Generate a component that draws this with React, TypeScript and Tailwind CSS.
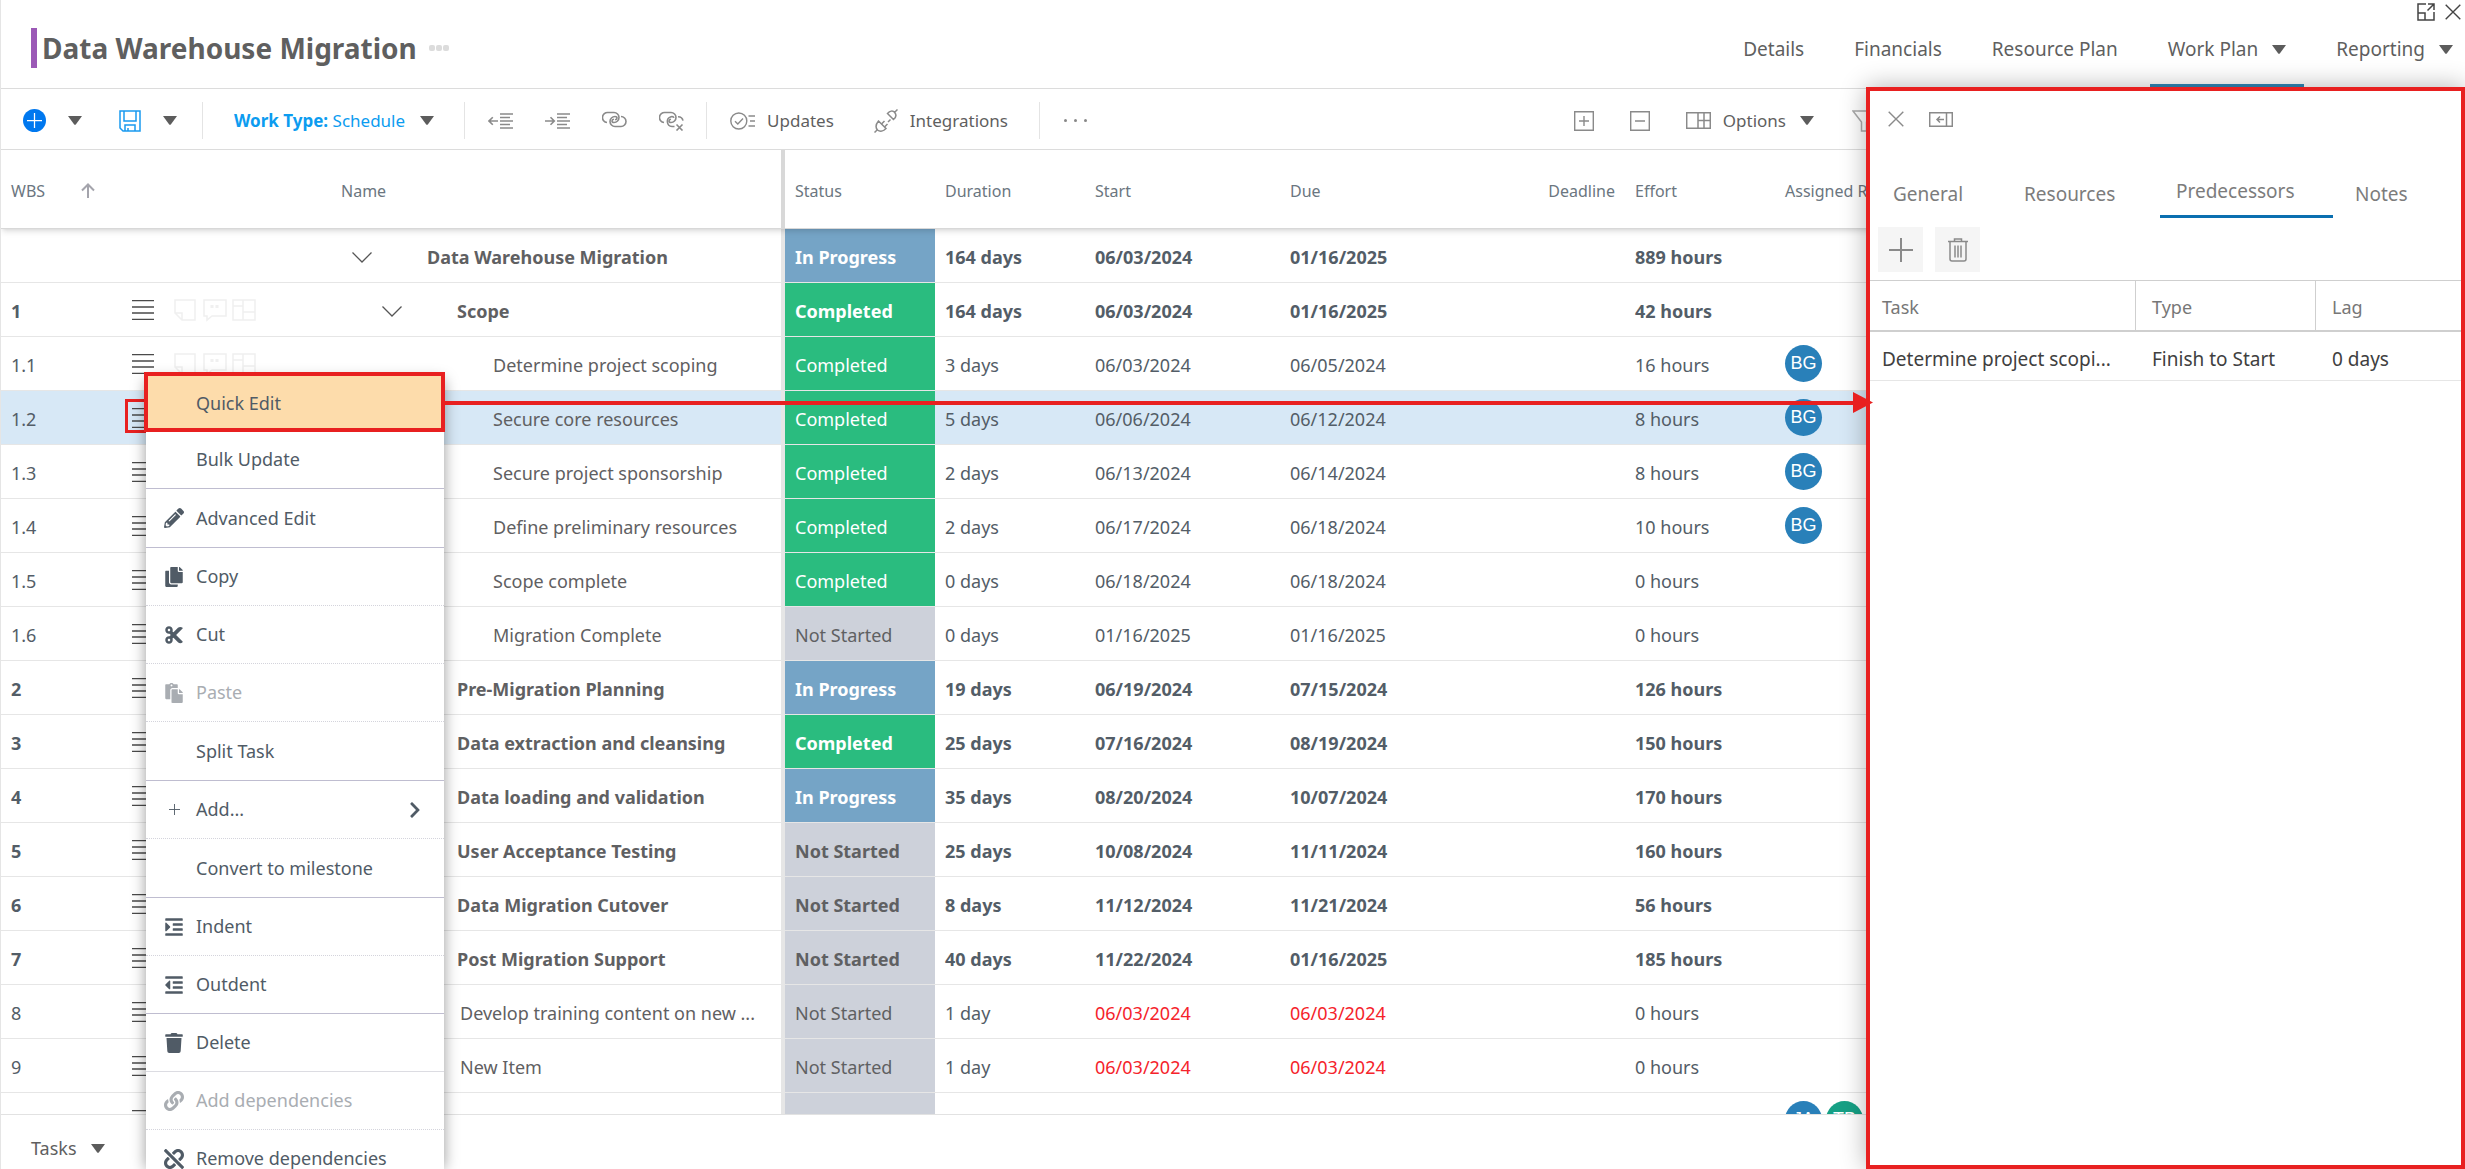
import type { ReactNode } from "react";
import {
  FaChevronRight,
  FaCopy,
  FaCut,
  FaIndent,
  FaLink,
  FaOutdent,
  FaPaste,
  FaPencilAlt,
  FaTrash,
  FaUnlink,
} from "react-icons/fa";

type Status = "In Progress" | "Completed" | "Not Started";

type Task = {
  wbs: string;
  name: string;
  indent: string;
  status: Status;
  duration: string;
  start: string;
  due: string;
  effort: string;
  bold?: boolean;
  open?: boolean;
  badges?: boolean;
  selected?: boolean;
  late?: boolean;
  people?: { initials: string; color: string }[];
};

const BG = [{ initials: "BG", color: "bg-[#2980b9]" }];

const TASKS: Task[] = [
  { wbs: "", name: "Data Warehouse Migration", indent: "pl-[22px]", status: "In Progress", duration: "164 days", start: "06/03/2024", due: "01/16/2025", effort: "889 hours", bold: true, open: true },
  { wbs: "1", name: "Scope", indent: "pl-[52px]", status: "Completed", duration: "164 days", start: "06/03/2024", due: "01/16/2025", effort: "42 hours", bold: true, open: true, badges: true },
  { wbs: "1.1", name: "Determine project scoping", indent: "pl-[163px]", status: "Completed", duration: "3 days", start: "06/03/2024", due: "06/05/2024", effort: "16 hours", badges: true, people: BG },
  { wbs: "1.2", name: "Secure core resources", indent: "pl-[163px]", status: "Completed", duration: "5 days", start: "06/06/2024", due: "06/12/2024", effort: "8 hours", selected: true, people: BG },
  { wbs: "1.3", name: "Secure project sponsorship", indent: "pl-[163px]", status: "Completed", duration: "2 days", start: "06/13/2024", due: "06/14/2024", effort: "8 hours", people: BG },
  { wbs: "1.4", name: "Define preliminary resources", indent: "pl-[163px]", status: "Completed", duration: "2 days", start: "06/17/2024", due: "06/18/2024", effort: "10 hours", people: BG },
  { wbs: "1.5", name: "Scope complete", indent: "pl-[163px]", status: "Completed", duration: "0 days", start: "06/18/2024", due: "06/18/2024", effort: "0 hours" },
  { wbs: "1.6", name: "Migration Complete", indent: "pl-[163px]", status: "Not Started", duration: "0 days", start: "01/16/2025", due: "01/16/2025", effort: "0 hours" },
  { wbs: "2", name: "Pre-Migration Planning", indent: "pl-[127px]", status: "In Progress", duration: "19 days", start: "06/19/2024", due: "07/15/2024", effort: "126 hours", bold: true },
  { wbs: "3", name: "Data extraction and cleansing", indent: "pl-[127px]", status: "Completed", duration: "25 days", start: "07/16/2024", due: "08/19/2024", effort: "150 hours", bold: true },
  { wbs: "4", name: "Data loading and validation", indent: "pl-[127px]", status: "In Progress", duration: "35 days", start: "08/20/2024", due: "10/07/2024", effort: "170 hours", bold: true },
  { wbs: "5", name: "User Acceptance Testing", indent: "pl-[127px]", status: "Not Started", duration: "25 days", start: "10/08/2024", due: "11/11/2024", effort: "160 hours", bold: true },
  { wbs: "6", name: "Data Migration Cutover", indent: "pl-[127px]", status: "Not Started", duration: "8 days", start: "11/12/2024", due: "11/21/2024", effort: "56 hours", bold: true },
  { wbs: "7", name: "Post Migration Support", indent: "pl-[127px]", status: "Not Started", duration: "40 days", start: "11/22/2024", due: "01/16/2025", effort: "185 hours", bold: true },
  { wbs: "8", name: "Develop training content on new ...", indent: "pl-[130px]", status: "Not Started", duration: "1 day", start: "06/03/2024", due: "06/03/2024", effort: "0 hours", late: true },
  { wbs: "9", name: "New Item", indent: "pl-[130px]", status: "Not Started", duration: "1 day", start: "06/03/2024", due: "06/03/2024", effort: "0 hours", late: true },
  { wbs: "", name: "", indent: "pl-[130px]", status: "Not Started", duration: "", start: "", due: "", effort: "", people: [{ initials: "JA", color: "bg-[#2980b9]" }, { initials: "TB", color: "bg-[#16a085]" }] },
];

const STATUS_STYLE: Record<Status, string> = {
  "In Progress": "bg-[#75a4c6] text-white",
  Completed: "bg-[#2abc7f] text-white",
  "Not Started": "bg-[#cdd1da] text-[#5f6062]",
};

const SOLID = "h-[59px] border-b border-[#bfbdd0]";
const DOTTED = "h-[58px] border-b border-dotted border-[#d4d4dc]";

type MenuEntry = {
  label: string;
  icon?: ReactNode;
  line: string;
  disabled?: boolean;
  more?: boolean;
};

const MENU: MenuEntry[] = [
  { label: "Bulk Update", line: SOLID },
  { label: "Advanced Edit", icon: <FaPencilAlt />, line: SOLID },
  { label: "Copy", icon: <FaCopy />, line: DOTTED },
  { label: "Cut", icon: <FaCut />, line: DOTTED },
  { label: "Paste", icon: <FaPaste />, line: DOTTED, disabled: true },
  { label: "Split Task", line: SOLID },
  { label: "Add...", icon: <PlusThin className="size-[11px]" />, line: DOTTED, more: true },
  { label: "Convert to milestone", line: SOLID },
  { label: "Indent", icon: <FaIndent />, line: DOTTED },
  { label: "Outdent", icon: <FaOutdent />, line: "h-[58px] border-b border-[#bfbdd0]" },
  { label: "Delete", icon: <FaTrash />, line: "h-[58px] border-b border-[#dcdce2]" },
  { label: "Add dependencies", icon: <FaLink />, line: DOTTED, disabled: true },
  { label: "Remove dependencies", icon: <FaUnlink />, line: DOTTED },
];

function PlusThin({ className }: { className: string }) {
  return (
    <svg className={className} viewBox="0 0 24 24" fill="none" stroke="currentColor" strokeWidth="2">
      <path d="M12 0v24M0 12h24" />
    </svg>
  );
}

function Caret() {
  return (
    <svg className="h-[9px] w-[14px] shrink-0" viewBox="0 0 14 9" fill="#5c5c5c">
      <path d="M0 0h14L7.8 8.4q-.8.9-1.6 0z" />
    </svg>
  );
}

function Chevron() {
  return (
    <svg className="h-[11px] w-5 shrink-0" viewBox="0 0 20 11" fill="none" stroke="#555" strokeWidth="1.3">
      <path d="M.5.5 10 10 19.5.5" />
    </svg>
  );
}

function CrossIcon({ className }: { className: string }) {
  return (
    <svg className={className} viewBox="0 0 16 16" fill="none" stroke="currentColor" strokeWidth="1.4">
      <path d="M.7.7l14.6 14.6M15.3.7.7 15.3" />
    </svg>
  );
}

function HandleIcon() {
  return (
    <svg className="h-5 w-[22px]" viewBox="0 0 22 20" fill="none" stroke="#4a4a4a" strokeWidth="1.3">
      <path d="M0 .7h22M0 7h22M0 13h22M0 19.3h22" />
    </svg>
  );
}

function BadgeIcons() {
  return (
    <svg className="h-6 w-[82px]" viewBox="0 0 82 24" fill="none" stroke="#f0f0f0" strokeWidth="1.6">
      <path d="M1 2h20v20H8l-7-7zM8 22v-7H1" />
      <path d="M30 2h22v16H38l-5 4v-4h-3z" />
      <path d="M38 7v3M43 7v3" strokeWidth="3" />
      <path d="M59 2h22v20H59zM69 2v20M59 8h10M69 14h12" />
    </svg>
  );
}

function ShiftIcon({ right }: { right?: boolean }) {
  return (
    <svg className="h-4 w-[25px]" viewBox="0 0 25 16" fill="none" stroke="#8a8a8a" strokeWidth="1.6">
      <path d="M12 1h13M12 4.5h10M12 8h13M12 11.5h10M12 15h13" strokeWidth="1.5" />
      <path d={right ? "M0 8h9M5.5 4.2 9.3 8l-3.8 3.8" : "M10 8H1M4.8 4.2 1 8l3.8 3.8"} />
    </svg>
  );
}

function ChainIcon({ broken }: { broken?: boolean }) {
  return (
    <svg className="h-5 w-[25px]" viewBox="0 0 25 20" fill="none" stroke="#8a8a8a" strokeWidth="1.6">
      <path d="M5 11.5A5 5 0 0 1 6 1.500h6a5 5 0 0 1 0 10q-2 0-2-1.500t2-1.800" />
      {broken ? (
        <>
          <path d="M15.5 15.5H13a5 5 0 0 1-1-9.800q2.600-.4 2.800 1.200M19 5.700a5 5 0 0 1 5 4" />
          <path d="m17.5 13.5 6 6M23.5 13.5l-6 6" />
        </>
      ) : (
        <path d="M19 5.5a5 5 0 0 1 0 10h-6a5 5 0 0 1 0-10q2 0 2 1.500t-2 1.800" />
      )}
    </svg>
  );
}

function UpdatesIcon() {
  return (
    <svg className="h-[18px] w-[25px]" viewBox="0 0 25 18" fill="none" stroke="#8a8a8a" strokeWidth="1.4">
      <circle cx="8.8" cy="9" r="8" />
      <path d="m5 9.2 2.800 2.800L13 6.500M18.500 4H25M20 9h5M18.500 14H25" />
    </svg>
  );
}

function PlugIcon() {
  return (
    <svg className="size-6" viewBox="0 0 24 24" fill="none" stroke="#8a8a8a" strokeWidth="1.5">
      <path d="m13.500 4.500 6 6c2.500-2 3.200-4.500 1.200-7s-5-1.500-7.200 1zM20.700 3.300 23.500.5" />
      <path d="m4.500 12 7.500 7.500c-2.500 2.800-6 3.500-8.500 1.500-2.300-2.700-1.500-6 1-9zM3.300 20.700.5 23.500" />
      <path d="M14 13l2.500-2.500M7.500 15l3-3M10.500 18l3-3" />
    </svg>
  );
}

function Divider() {
  return <div className="h-[37px] w-px bg-[#e4e4e4]" />;
}

function Header() {
  return (
    <header className="flex h-[89px] shrink-0 items-stretch border-b border-[#dcdcdc] text-[19px] text-[#5f5f5f]">
      <div className="flex items-center gap-3 pb-[5px] pt-3 pl-[30px]">
        <h1 className="flex h-10 items-center border-l-[6px] border-[#9b59b6] pl-[5px] text-[28px] font-bold">
          Data Warehouse Migration
        </h1>
        <button aria-label="More" className="flex gap-px">
          <i className="size-[6px] rounded-xs bg-[#dcdcdc]" />
          <i className="size-[6px] rounded-xs bg-[#dcdcdc]" />
          <i className="size-[6px] rounded-xs bg-[#dcdcdc]" />
        </button>
      </div>
      <nav className="ml-auto flex gap-[14px] whitespace-nowrap">
        <a href="#details" className="flex items-center px-[18px] pt-[10px]">Details</a>
        <a href="#financials" className="flex items-center px-[18px] pt-[10px]">Financials</a>
        <a href="#resource-plan" className="flex items-center px-[18px] pt-[10px]">Resource Plan</a>
        <a href="#work-plan" className="flex items-center gap-[14px] border-b-4 border-[#2f87b7] px-[18px] pt-[14px]">
          Work Plan <Caret />
        </a>
        <a href="#reporting" className="flex items-center gap-[14px] pt-[10px] pl-[18px] pr-3">
          Reporting <Caret />
        </a>
      </nav>
      <div className="absolute right-1 top-[3px] flex items-center gap-[10px] text-[#444]">
        <button aria-label="Open in window">
          <svg className="size-[18px]" viewBox="0 0 18 18" fill="none" stroke="currentColor" strokeWidth="1.5">
            <path d="M9 1H1v16h16V9M11 1h6v6M17 1l-6.500 6.500M1 10h7v7" />
          </svg>
        </button>
        <button aria-label="Close"><CrossIcon className="size-4" /></button>
      </div>
    </header>
  );
}

function Toolbar() {
  return (
    <div className="flex h-[61px] shrink-0 items-center border-b border-[#dcdcdc] pt-[3px] pl-[22px] pr-[589px] text-[17px] whitespace-nowrap text-[#5f5f5f]">
      <button aria-label="Add" className="flex size-[23px] items-center justify-center rounded-full bg-[#0078ef] text-white">
        <PlusThin className="size-[15px]" />
      </button>
      <button aria-label="Add options" className="ml-[22px]"><Caret /></button>
      <button aria-label="Save" className="ml-[37px]">
        <svg className="size-[22px]" viewBox="0 0 22 22" fill="none" stroke="#1a9af0" strokeWidth="1.5">
          <path d="M1 1h20v20H4l-3-3zM5 1v10h12V1M6 21v-6h10v6M9 21v-3" />
        </svg>
      </button>
      <button aria-label="Save options" className="ml-[22px]"><Caret /></button>
      <div className="ml-[25px]"><Divider /></div>
      <button className="ml-[31px] flex items-center gap-[15px] text-[#0c9cf0]">
        <span><b>Work Type:</b> Schedule</span>
        <Caret />
      </button>
      <div className="ml-[30px]"><Divider /></div>
      <div className="ml-[23px] flex items-center gap-8">
        <button aria-label="Outdent"><ShiftIcon /></button>
        <button aria-label="Indent"><ShiftIcon right /></button>
        <button aria-label="Link"><ChainIcon /></button>
        <button aria-label="Unlink"><ChainIcon broken /></button>
      </div>
      <div className="ml-[22px]"><Divider /></div>
      <button className="ml-[23px] flex items-center gap-3"><UpdatesIcon /> Updates</button>
      <button className="ml-10 flex items-center gap-3"><PlugIcon /> Integrations</button>
      <div className="ml-[31px]"><Divider /></div>
      <button aria-label="More tools" className="ml-6 flex gap-[7px]">
        <i className="size-[3px] rounded-full bg-[#888]" />
        <i className="size-[3px] rounded-full bg-[#888]" />
        <i className="size-[3px] rounded-full bg-[#888]" />
      </button>
      <div className="ml-auto flex items-center">
        <button aria-label="Expand all">
          <svg className="size-5" viewBox="0 0 20 20" fill="none" stroke="#8a8a8a" strokeWidth="1.4">
            <path d="M.7.7h18.600v18.600H.7zM10 5v10M5 10h10" />
          </svg>
        </button>
        <button aria-label="Collapse all" className="ml-9">
          <svg className="size-5" viewBox="0 0 20 20" fill="none" stroke="#8a8a8a" strokeWidth="1.4">
            <path d="M.7.7h18.600v18.600H.7zM5 10h10" />
          </svg>
        </button>
        <button className="ml-9 flex items-center gap-3">
          <svg className="h-[17px] w-[25px]" viewBox="0 0 25 17" fill="none" stroke="#8a8a8a" strokeWidth="1.5">
            <path d="M.7.7h23.600v15.600H.7zM12 .7v15.600M18 .7v15.600M12 8.500h12.300" />
          </svg>
          Options
          <span className="ml-[2px]"><Caret /></span>
        </button>
        <button aria-label="Filter" className="ml-[38px]">
          <svg className="size-6" viewBox="0 0 24 24" fill="none" stroke="#aaa" strokeWidth="1.5">
            <path d="M1 2h22l-8.500 11v9h-5v-9z" />
          </svg>
        </button>
      </div>
    </div>
  );
}

function TaskRow({ task }: { task: Task }) {
  const date = task.late ? "text-[#f5232b]" : "";
  return (
    <tr
      className={`${task.bold ? "font-bold" : ""} ${task.selected ? "bg-[#d7e8f6]" : ""} *:h-[54px] *:border-b *:border-[#e6e6e6] *:pt-[3px]`}
    >
      <td className="pl-[10px]">{task.wbs}</td>
      <td className="relative">
        {task.selected && (
          <div className="absolute top-2 -left-px h-[34px] w-8 border-[3px] border-[#e82020]" />
        )}
        {(task.wbs || !task.open) && (
          <div className="flex items-center gap-5 pb-[3px] pl-[6px]">
            <button aria-label={`Task menu ${task.wbs}`}><HandleIcon /></button>
            {task.badges && <BadgeIcons />}
          </div>
        )}
      </td>
      <td className={`border-r-4 border-r-[#e2e3e6] text-[#5f6062] ${task.indent}`}>
        <div className="flex items-center gap-[55px] whitespace-nowrap">
          {task.open && <button aria-label={`Collapse ${task.name}`}><Chevron /></button>}
          {task.name}
        </div>
      </td>
      <td className={`pl-[10px] ${STATUS_STYLE[task.status]}`}>{task.status}</td>
      <td className="pl-[10px]">{task.duration}</td>
      <td className={`pl-[10px] ${date}`}>{task.start}</td>
      <td className={`pl-[10px] ${date}`}>{task.due}</td>
      <td />
      <td className="pl-[10px]">{task.effort}</td>
      <td className="pl-[10px]">
        <div className="flex gap-1 pb-[3px]">
          {task.people?.map((p) => (
            <span
              key={p.initials}
              className={`flex size-[37px] items-center justify-center rounded-full font-['Liberation_Sans',sans-serif] text-[18px] text-white ${p.color}`}
            >
              {p.initials}
            </span>
          ))}
        </div>
      </td>
    </tr>
  );
}

function WorkPlanTable() {
  return (
    <div className="min-h-0 flex-1 overflow-hidden">
      <table className="w-full table-fixed border-separate border-spacing-0 text-left text-[18px] text-[#535d67]">
        <colgroup>
          <col className="w-[125px]" />
          <col className="w-[204px]" />
          <col className="w-[455px]" />
          <col className="w-[150px]" />
          <col className="w-[150px]" />
          <col className="w-[195px]" />
          <col className="w-[195px]" />
          <col className="w-[150px]" />
          <col className="w-[150px]" />
          <col />
        </colgroup>
        <thead className="relative z-10 text-[16px] text-[#6b7680] shadow-md">
          <tr className="*:h-[79px] *:border-b *:border-[#d8d8d8] *:bg-white *:pt-[3px] *:font-normal">
            <th className="pl-[10px]">
              <div className="flex items-center gap-9">
                WBS
                <svg className="h-[15px] w-[14px]" viewBox="0 0 14 15" fill="none" stroke="#a4a4ac" strokeWidth="2">
                  <path d="M7 15V1.500M1 7.500l6-6 6 6" />
                </svg>
              </div>
            </th>
            <th />
            <th className="border-r-4 border-r-[#e2e3e6] pl-[11px]">Name</th>
            <th className="pl-[10px]">Status</th>
            <th className="pl-[10px]">Duration</th>
            <th className="pl-[10px]">Start</th>
            <th className="pl-[10px]">Due</th>
            <th className="pr-[10px] text-right">Deadline</th>
            <th className="pl-[10px]">Effort</th>
            <th className="pl-[10px]">Assigned R</th>
          </tr>
        </thead>
        <tbody>
          {TASKS.map((task, i) => (
            <TaskRow key={i} task={task} />
          ))}
        </tbody>
      </table>
    </div>
  );
}

function ContextMenu() {
  return (
    <>
      <div className="absolute top-[380px] bottom-0 left-[145px] z-20 w-[298px] shadow-[0_0_14px_rgba(0,0,0,0.4)]" />
      <div className="absolute top-[372px] bottom-0 left-[143px] z-20 w-[301px] overflow-hidden text-[18px] text-[#505b66]">
        <button className="relative z-10 flex h-[60px] w-full items-center border-4 border-[#e82020] bg-[#fddcab] pt-[2px] pl-12">
          Quick Edit
        </button>
        <div className="mr-px ml-[2px] -mt-[2px]">
          {MENU.map((item) => (
            <button
              key={item.label}
              disabled={item.disabled}
              className={`flex w-full items-center bg-white pl-[17px] ${item.line} ${item.disabled ? "text-[#a9adb2]" : ""}`}
            >
              <span className="mr-[11px] flex w-[22px] justify-center text-[20px]">{item.icon}</span>
              {item.label}
              {item.more && <FaChevronRight className="mr-5 ml-auto size-[18px]" />}
            </button>
          ))}
        </div>
      </div>
    </>
  );
}

function QuickEditPanel() {
  return (
    <aside className="absolute top-[87px] right-0 bottom-0 z-20 w-[599px] border-4 border-[#e82020] bg-white shadow-[0_0_24px_rgba(0,0,0,0.3)]">
      <div className="flex h-14 items-center gap-[25px] pl-[18px] text-[#8a8a8a]">
        <button aria-label="Close panel"><CrossIcon className="size-4" /></button>
        <button aria-label="Dock panel">
          <svg className="h-[15px] w-6" viewBox="0 0 24 15" fill="none" stroke="currentColor" strokeWidth="1.5">
            <path d="M.7.7h22.600v13.600H.7zM17.500.7v13.600M15 7.500H8M11 4.500l-3 3 3 3" />
          </svg>
        </button>
      </div>
      <div role="tablist" className="mt-5 flex h-[51px] gap-[6px] pl-[7px] text-[19px] text-[#7c7c7c]">
        <button role="tab" className="w-[125px] pt-1 pl-4 text-left">General</button>
        <button role="tab" className="w-[146px] pt-1 pl-4 text-left">Resources</button>
        <button role="tab" aria-selected="true" className="w-[173px] border-b-[3px] border-[#0a6fb0] pl-4 text-left">Predecessors</button>
        <button role="tab" className="pt-1 pl-4 text-left">Notes</button>
      </div>
      <div className="flex gap-3 px-2 pt-[9px] pb-2 text-[#8a8a8a]">
        <button aria-label="Add predecessor" className="flex size-[45px] items-center justify-center bg-[#f5f5f5]">
          <PlusThin className="size-6" />
        </button>
        <button aria-label="Delete predecessor" className="flex size-[45px] items-center justify-center bg-[#f5f5f5]">
          <svg className="h-6 w-5" viewBox="0 0 20 24" fill="none" stroke="currentColor" strokeWidth="1.5">
            <path d="M0 3.500h20M6.500 3.500V1h7v2.500M2 3.500V21q0 2 2 2h12q2 0 2-2V3.500M7 7.500v12M10 7.500v12M13 7.500v12" />
          </svg>
        </button>
      </div>
      <table className="w-full table-fixed border-separate border-spacing-0 text-left">
        <colgroup>
          <col className="w-[266px]" />
          <col className="w-[180px]" />
          <col />
        </colgroup>
        <thead>
          <tr className="text-[18px] text-[#777] *:h-[52px] *:border-t *:border-b-2 *:border-[#cfcfcf] *:pt-1 *:font-normal">
            <th className="border-r pl-3">Task</th>
            <th className="border-r pl-4">Type</th>
            <th className="pl-4">Lag</th>
          </tr>
        </thead>
        <tbody>
          <tr className="text-[19px] text-[#404040] *:h-[49px] *:border-b *:border-[#e6e6e6] *:pt-[6px] *:whitespace-nowrap">
            <td className="pl-3">Determine project scopi...</td>
            <td className="pl-4">Finish to Start</td>
            <td className="pl-4">0 days</td>
          </tr>
        </tbody>
      </table>
    </aside>
  );
}

function CalloutArrow() {
  return (
    <div className="absolute top-[392px] right-[592px] left-[444px] z-30 flex h-[21px] items-center">
      <div className="h-1 flex-1 bg-[#e82020]" />
      <svg className="h-[21px] w-5" viewBox="0 0 20 21" fill="#e82020">
        <path d="M0 0l20 10.500L0 21z" />
      </svg>
    </div>
  );
}

export default function App() {
  return (
    <div className="relative flex h-screen flex-col overflow-hidden border-l border-[#e5e5e5] bg-white font-['Noto_Sans','Open_Sans',sans-serif]">
      <Header />
      <Toolbar />
      <WorkPlanTable />
      <footer className="flex h-[55px] shrink-0 items-center border-t border-[#e2e2e2] pt-3 pl-[30px] text-[18px] text-[#5f5f5f]">
        <button className="flex items-center gap-[14px]">
          Tasks <Caret />
        </button>
      </footer>
      <ContextMenu />
      <QuickEditPanel />
      <CalloutArrow />
    </div>
  );
}
